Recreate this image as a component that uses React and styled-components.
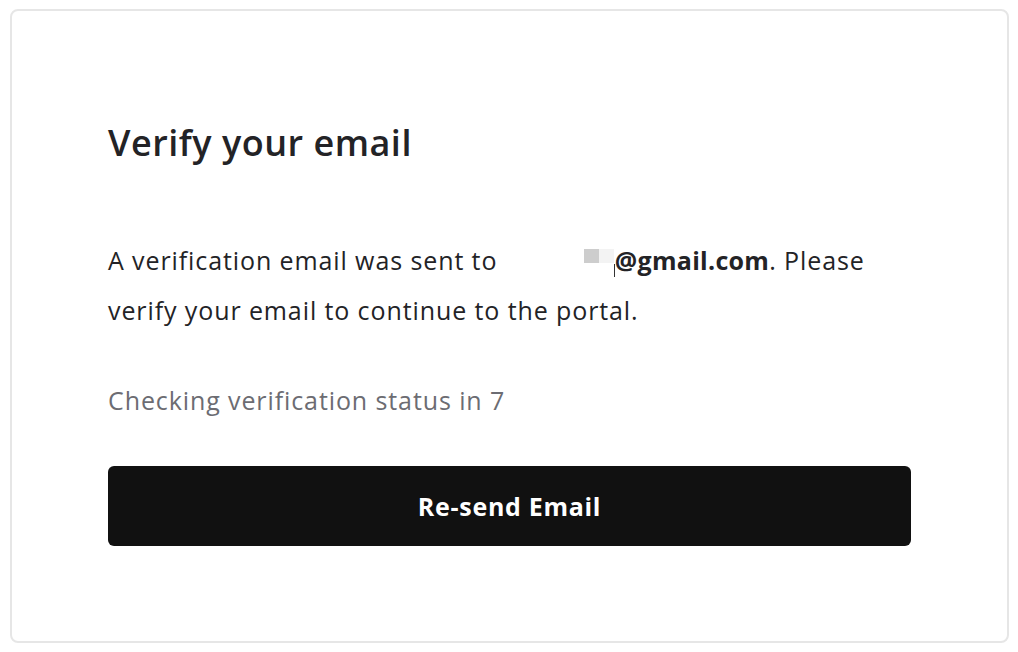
import React from 'react';
import styled, { createGlobalStyle } from 'styled-components';

const GlobalStyle = createGlobalStyle`
  html, body {
    margin: 0;
    padding: 0;
    background: #ffffff;
  }
  body {
    font-family: "Open Sans", "Noto Sans", sans-serif;
    color: #232326;
  }
`;

const Page = styled.div`
  display: flex;
  padding: 9px 9px 9px 10px;
`;

const Card = styled.div`
  box-sizing: border-box;
  flex: 1;
  display: flex;
  flex-direction: column;
  gap: 40px;
  height: 634px;
  border: 2px solid #e6e6e6;
  border-radius: 8px;
  padding: 110px 96px 0;
`;

const Heading = styled.h1`
  margin: 0 0 30px;
  font-size: 36px;
  line-height: 44px;
  font-weight: 600;
  letter-spacing: 0.5px;
  color: #232326;
`;

const Text = styled.p`
  margin: 0;
  font-size: 25px;
  line-height: 50px;
  letter-spacing: 0.9px;
  color: ${p => p.$muted ? '#6c6c72' : '#232326'};
`;

const Redacted = styled.span`
  display: inline-flex;
  justify-content: flex-end;
  width: 110px;
  height: 28px;
  vertical-align: middle;
`;

const Block = styled.span`
  align-self: flex-start;
  width: 15px;
  height: 14px;
  background: ${p => p.$tone};
`;

const Caret = styled.span`
  align-self: flex-end;
  width: 1px;
  height: 13px;
  background: #333;
`;

const Email = styled.strong`
  font-weight: 700;
  letter-spacing: 0.3px;
`;

const Button = styled.button`
  height: 80px;
  margin-top: 1px;
  border: none;
  border-radius: 6px;
  background: #111111;
  color: #ffffff;
  font-family: inherit;
  font-size: 25px;
  font-weight: 700;
  letter-spacing: 0.7px;
  cursor: pointer;
`;

export default function App() {
  return (
    <>
      <GlobalStyle />
      <Page>
        <Card>
          <Heading>Verify your email</Heading>
          <Text>
            A verification email was sent to{' '}
            <Redacted>
              <Block $tone="#cdcdcd" />
              <Block $tone="#f3f3f3" />
              <Caret />
            </Redacted>
            <Email>@gmail.com</Email>. Please verify your email to continue to the portal.
          </Text>
          <Text $muted>Checking verification status in 7</Text>
          <Button>Re-send Email</Button>
        </Card>
      </Page>
    </>
  );
}
